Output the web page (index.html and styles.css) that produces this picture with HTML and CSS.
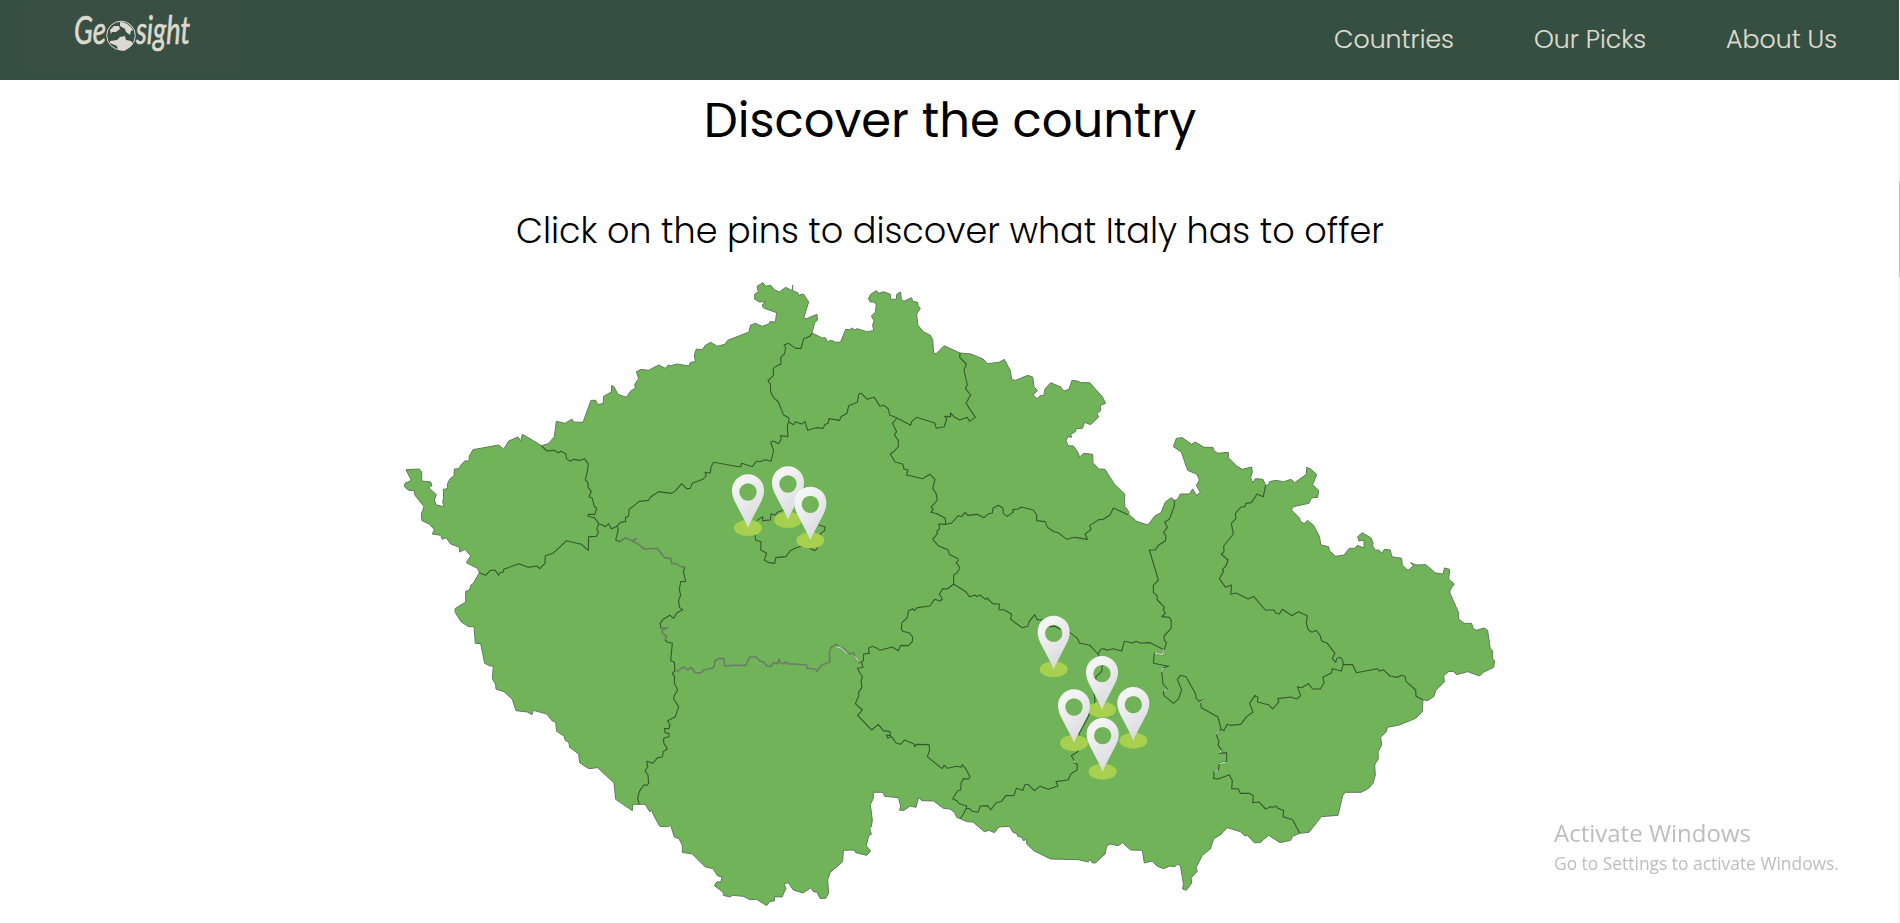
FILE: index.html
```html
<!DOCTYPE html>
<html lang="en">
<head>
<meta charset="utf-8">
<title>Geosight</title>
<link rel="stylesheet" href="styles.css">
</head>
<body>
<header class="header">
  <a class="brand">
    <svg class="logo" viewBox="0 0 212 63">
      <g fill="#dcdad0">
        <text class="logo-text" x="49" y="40" textLength="32" lengthAdjust="spacingAndGlyphs">Ge</text>
        <text class="logo-text" x="111" y="40" textLength="54" lengthAdjust="spacingAndGlyphs">sight</text>
        <circle cx="96" cy="31.500" r="14.300" fill="none" stroke="#dcdad0" stroke-width="1"/>
        <path d="M85 26l4-4 5 0 1 3-4 3-4 0-1 2zM95 18q8 0 13 8l-2 1-1 4-4-3-1-3-5-3zM85 37l7-1 3-3 5-1 1 4 5 1 2 3-4 4-5 3-6-1-1-4-7-3z"/>
      </g>
    </svg>
  </a>
  <nav class="nav"><a>Countries</a><a>Our Picks</a><a>About Us</a></nav>
</header>
<main class="content">
  <h1 class="title">Discover the country</h1>
  <h2 class="subtitle">Click on the pins to discover what Italy has to offer</h2>
  <svg class="map" viewBox="0 0 3360 1950">
    <defs>
      <linearGradient id="pinFill" x1="0" y1="0" x2=".55" y2="1"><stop offset="0" stop-color="#fcfcfc"/><stop offset="1" stop-color="#dadbdd"/></linearGradient>
      <g id="pin">
        <ellipse rx="42" ry="24" fill="#a7d04e"/>
        <path fill="url(#pinFill)" fill-rule="evenodd" d="M0 0C-4-12-10-22-15-32L-40-80C-45-91-48-101-48-113A48 48 0 0 1 48-113C48-101 45-91 40-80L15-32C10-22 4-12 0 0ZM0-134A26 26 0 1 0 0-82A26 26 0 1 0 0-134Z"/>
      </g>
    </defs>
    <path class="land" d="M48 599 88 597 95 605 95 633 122 636 126 648 117 648 118 655 139 674 133 690 139 705 162 710 158 695 161 684 160 658 172 656 173 640 180 626 192 618 193 597 207 596 214 583 226 572 237 574 238 558 249 539 326 525 341 538 356 513 384 501 392 514 397 493 430 512 454 527 475 521 493 500 499 454 525 460 546 447 550 456 579 457 603 391 617 391 624 404 640 400 641 379 664 366 665 347 671 349 684 373 709 382 723 362 736 355 734 343 746 326 739 305 753 298 776 301 806 285 826 295 836 284 840 288 861 282 897 288 901 277 916 275 913 255 919 237 937 239 946 226 962 217 982 229 1004 223 1013 211 1077 186 1082 165 1097 160 1116 169 1137 162 1140 154 1156 157 1160 128 1121 114 1116 105 1126 95 1108 96 1094 87 1094 73 1105 65 1101 49 1119 38 1127 49 1142 46 1153 59 1168 66 1187 52
    1206 62 1208 45 1208 62 1223 68 1226 76 1240 72 1256 96 1241 144 1249 146 1281 133 1282 151 1274 158 1266 189 1297 204 1306 203 1312 215 1324 211 1337 217 1352 216 1367 178 1379 179 1387 174 1394 180 1401 176 1430 185 1451 182 1448 165 1452 152 1444 138 1456 127 1459 105 1453 96 1441 96 1435 86 1442 73 1459 62 1466 70 1481 65 1501 73 1502 88 1519 88 1520 73 1532 66 1534 89 1542 94 1565 83 1568 94 1583 97 1584 107 1591 115 1580 132 1583 164 1599 185 1620 195 1628 208 1631 250 1640 250 1662 227 1710 249 1743 252 1779 267 1792 281 1827 277 1843 268 1861 302 1865 329 1877 331 1913 316 1928 321 1932 351 1943 362 1928 375 1942 386 1951 376 1961 378 1965 357 1982 338 2012 351 2022 363 2037 358 2046 331
    2067 334 2070 338 2099 338 2137 380 2147 400 2131 406 2132 422 2121 430 2126 441 2102 464 2084 457 2077 475 2059 476 2056 485 2042 493 2045 502 2035 500 2028 511 2034 527 2050 528 2063 546 2069 561 2082 550 2108 553 2109 578 2126 597 2145 598 2172 641 2204 672 2204 709 2216 724 2217 734 2240 754 2274 765 2294 738 2313 728 2326 696 2344 683 2353 691 2363 688 2371 672 2398 672 2408 657 2419 676 2431 667 2419 647 2428 630 2421 613 2393 601 2374 546 2350 530 2359 505 2377 503 2405 523 2416 516 2442 532 2469 532 2472 542 2484 550 2515 547 2515 563 2540 588 2557 598 2585 591 2587 607 2582 623 2588 639 2596 626 2619 628 2627 646 2635 645 2639 635 2656 631 2681 635 2703 628 2714 638 2749 613 2750 592 2762 597 2780 614 2768 644 2786 661 2783 682 2764 684 2757 700 2710 710 2704 719 2729 745 2731 754 2743 761 2752 751 2770 765 2788 799 2793 825 2816 830 2818 842 2837 859 2862 855 2878 835 2894 835 2902 826 2922 834 2922 810 2907 813 2903 800 2917 788 2944 805 2949 820 2947 826 2956 841 2966 840 2976 850 2983 838 3001 840 3005 860 3035 865 3037 886 3054 901 3070 888 3062 878 3078 885 3107 884 3137 909 3160 912 3163 894 3179 898 3176 928 3193 942 3180 960 3180 970 3206 1028
    3206 1047 3223 1060 3245 1060 3249 1075 3259 1081 3282 1074 3293 1081 3301 1137 3308 1142 3308 1166 3314 1173 3311 1192 3280 1207 3269 1218 3233 1205 3200 1214 3190 1204 3175 1205 3161 1217 3163 1236 3138 1260 3132 1279 3113 1292 3099 1289 3097 1325 3077 1345 3028 1365 2992 1372 2989 1385 2972 1402 2975 1425 2964 1445 2965 1466 2954 1485 2956 1515 2949 1540 2936 1555 2913 1567 2866 1567 2858 1577 2844 1636 2794 1640 2757 1687 2729 1690 2708 1699 2702 1711 2670 1718 2636 1696 2610 1718 2593 1718 2573 1697 2564 1697 2551 1685 2512 1673 2491 1695 2471 1706 2461 1737 2437 1756 2418 1793 2422 1804 2403 1824 2405 1839 2389 1861 2378 1857 2380 1840 2371 1786 2361 1783 2355 1790 2339 1788 2321 1796 2302 1789 2287 1773 2263 1779 2257 1741 2222 1740 2197 1718 2185 1727 2160 1722 2150 1728 2145 1752
    2116 1779 2106 1778 2099 1767 2095 1776 2065 1769 1982 1767 1931 1742 1910 1722 1910 1708 1900 1712 1895 1702 1883 1699 1880 1690 1870 1688 1858 1669 1827 1671 1813 1688 1797 1681 1783 1685 1749 1656 1730 1655 1711 1646 1700 1642 1693 1626 1679 1617 1660 1615 1631 1593 1595 1592 1586 1582 1578 1612 1560 1608 1542 1621 1529 1621 1532 1608 1525 1583 1484 1579 1479 1567 1450 1567 1450 1585 1441 1604 1447 1650 1444 1670 1439 1675 1444 1693 1436 1697 1429 1727 1442 1743 1430 1756 1397 1748 1392 1740 1360 1741 1358 1775 1320 1808 1313 1830 1316 1870 1307 1885 1290 1885 1281 1866 1271 1866 1263 1853 1239 1869
    1210 1860 1195 1838 1182 1842 1188 1855 1176 1881 1154 1880 1153 1893 1140 1894 1130 1907 1100 1888 1080 1889 1060 1879 1028 1876 1020 1881 1000 1876 1000 1868 988 1858 973 1847 980 1836 993 1835 996 1820 983 1818 969 1796 946 1791 907 1752 877 1747 877 1726 867 1706 853 1701 842 1666 833 1670 809 1669 788 1630 787 1620 780 1626 765 1603 729 1603 727 1622 677 1588 672 1539 623 1493 596 1496 569 1478 566 1452 539 1432 537 1418 525 1410 522 1398 500 1384 497 1356 487 1353 470 1332 430 1321 426 1334 412 1326 378 1322 367 1288 342 1265 318 1257 317 1244 307 1226 310 1188 300 1188 284 1180 272 1121 256 1120 252 1070 236 1070 214 1056 196 1028 195 1016 227 996 227 964 239 960 242 946 250 940 268 908 262 895 229 878
    242 858 225 838 209 846 208 832 182 822 168 803 157 808 152 796 127 792 133 779 119 763 96 752 94 732 102 710 75 676 72 661 58 662 43 650 45 640 64 631Z"/>
    <g class="borders">
      <path d="M454 527 470 543 493 541 505 548 513 544 528 552 529 565 541 574 550 568 572 571 583 566 595 582 593 600 586 629 595 640 594 652 604 664 597 680 607 685 613 710 620 713 615 733 596 733 593 738 613 743 626 760 620 778 626 786 619 799 596 800 595 841 573 822 560 820 530 812 489 850 480 853 466 857 465 880 449 896 441 888 414 892 387 881 366 889 341 898 340 906 330 908 326 916 315 900 300 902 287 916 268 908M626 762 638 765 646 770 656 761 664 777 681 768 692 757 707 755 706 743 716 738 717 718 748 694 775 691 782 681 806 665 845 670 857 662 875 641 890 656 901 655 907 640 940 627 949 617 945 607 961 609 963 590 971 577 1037 589 1052 590 1055 580 1087 590 1100 573 1109 575 1127 569 1143 574 1151 542 1142 516 1150 513 1166 521 1173 509 1172 497 1194 500 1192 468 1196 455M681 768 685 778 677 810 690 815 707 803"/>
      <g transform="translate(930 0)"><path d="M336 189 330 199 311 206 303 235 287 235 265 220 252 225 257 231 254 251 242 262 243 283 236 284 220 295 220 317 204 332 211 342 212 365 220 382 235 396 250 434 267 444 266 456 281 464 286 455 305 462 315 455 323 481 349 473 370 475 374 464 384 460 387 446 419 451 423 440 441 430 446 407 472 397 476 373 484 370 502 388 523 382 540 409 552 406 565 417 569 435 591 444 632 466 635 455 650 442 704 459 709 475 733 470 740 447 734 439 752 440 751 429 762 440 779 450 802 442 808 454 826 442 808 415 798 399 812 375 796 355 802 345 792 300 799 282 779 262 780 249M591 444 577 460 590 485 583 495 595 511 595 530 582 544 571 552 585 576 608 582 612 597 624 600 620 615 635 618 667 626 690 613 705 628 698 655 708 670 712 690 693 712 700 718 692 727 711 731 736 745 737 763 716 762 719 775 710 785 713 790 698 808 715 827 745 840 748 853 776 868M737 763 755 759 775 737 785 740 795 727 803 736 832 733 852 743 866 731 877 729 879 715 895 706 909 715 910 731 922 739 940 726 938 719 955 717 964 711 1000 720 1010 735 1010 752 1036 755 1042 772 1062 785 1075 788 1100 808M170 752 188 740 188 752 211 750 213 732 226 735 232 727 257 718M355 765 375 770 374 782 362 790 350 838 343 842 320 828 305 828 285 835 270 843 258 860 227 863 224 880 204 877 193 870 200 850 182 840 183 815 167 810 165 795"/></g>
      <g transform="translate(1950 180)"><path d="M80 628 104 622 142 628 135 612 153 599 149 587 176 569 190 568 210 555 220 534 264 554M403 511 403 528 388 568 374 577 382 592 371 607 378 618 376 633 355 646 346 660 328 660 355 750 340 766 340 787 351 797 352 810 374 833 369 838 376 850 365 860 388 862 394 872M677 466 670 500 651 492 634 518 617 520 615 530 603 531 586 550 588 565 574 580 580 612 551 648 552 665 544 672 564 690 558 708 547 718 551 724 538 746 557 772 575 765 572 793 588 789 625 807 641 799 676 840 702 840 708 850 718 852 727 838 756 857 775 845 802 857"/></g>
      <g transform="translate(150 840)"><path d="M735 50 730 65 737 94 722 95 718 118 722 136 716 150 718 172 728 179 711 188 701 205 690 196 672 206 660 220 663 235M675 270 684 277 697 280 692 332 703 337 705 362 697 370 704 380 703 400 713 420 701 440 701 447 716 470 706 500 683 512 690 525 687 536 673 536 675 548 687 550 687 560 671 565 671 578 682 597 670 605 667 621 653 623 638 640 620 634 623 650 615 663 624 675 626 700 620 706 611 705 598 725 593 745 598 763"/></g>
      <g transform="translate(1230 870)"><path d="M182 308 190 302 191 282 208 280 205 265 217 259 230 264 240 271 277 261 295 272 302 256 325 257 337 245 338 231 327 218 308 214 304 205 306 187 322 173 325 153 338 146 343 152 352 143 390 138 404 118 420 123 427 117 418 102 428 86 442 87 461 72 461 44 470 40 480 24 469 8 476 0M185 308 189 322 172 325 187 350 183 365 186 382 175 398 177 405 166 431 187 450 173 466 215 510 235 493 250 512 270 515 271 527 259 525 263 534 275 530 288 549 301 553 314 540 342 552 344 560 349 553 387 554 389 570 382 590 426 626 433 616 443 625 471 619 483 622 487 614 497 626 510 650 506 657 490 656 483 670 482 690 473 692 458 716 470 722 478 731 500 738 499 745 490 762 481 776M500 745 509 746 517 754 534 757 541 738 563 737 572 750 589 728 605 724 617 707 642 706 649 685 669 691 674 675 684 673 703 692 720 679 745 688 774 678 768 665 804 660 813 641 831 630 832 613 820 608 822 600 814 587 835 574 838 520 870 460 885 425 883 400 888 350 905 335 907 315 898 290 894 282M461 72 497 95 508 110 526 105 530 110 540 105 556 118 561 114 578 131 598 132 597 149 614 150 635 163 632 178 666 203 683 199 688 184 704 164 712 179 728 180 750 200 765 199 780 207 810 218 833 236 838 249 870 256 894 282 902 268 912 266 920 271 940 266 965 273 973 244 998 249 1008 244 1020 249 1050 248 1089 268"/></g>
      <g transform="translate(2130 870)"><path d="M214 180 213 206 192 228 193 240 199 248 193 268 188 270 189 285 163 280 160 310 206 319 188 323 185 335 189 372 203 388 190 395 192 407 221 430 236 416 245 390 232 358 242 346 258 350 287 402 289 416 298 424 313 418 302 430 304 443 354 471 363 507 349 525 357 545 354 555 366 572 359 580 380 578 380 604 358 610 355 632 342 634 341 655 355 657 388 644 397 662 395 686 415 687 421 700 449 700 460 708 458 728 477 726 497 747 512 740 520 742 528 738 534 745 551 752 549 770 578 779 599 820M363 507 372 512 381 493 390 496 422 493 440 470 459 456 449 430 465 406 474 412 472 426 505 434 518 447 537 425 533 416 571 411 590 417 602 407 592 380 605 383 625 371 638 387 661 387 672 368 669 352 695 338 697 326 724 333 730 313M622 167 619 190 625 210 636 217 649 211 661 228 665 243 682 250 705 280 697 295 707 307 711 295 721 292 728 300 730 313 758 314 769 338 832 326 838 333 850 329 870 348 893 352 903 346 915 349 918 364 947 390 948 409 969 419"/></g>
    </g>
    <g class="gaps">
      <path d="M690 815 707 803 725 812 738 806 728 815 742 820 763 837 802 835 824 863 842 866 846 881 858 881 872 890 884 890"/>
      <g transform="translate(150 840)"><path d="M663 235 684 233 667 240 667 250 680 258 675 270M705 362 714 363 725 353 735 352 742 360 753 353 766 368 783 369 791 360 815 355 823 349 824 333 838 325 852 326 854 348 878 346 918 346 929 321 948 321 961 334 973 337 980 348 993 349 1000 338 1014 340 1017 328 1022 339 1032 342 1037 335 1043 341 1100 345 1101 355 1125 357 1131 364 1145 345 1170 335 1168 308 1173 292 1189 283 1200 292 1210 295 1228 312 1240 308 1250 330 1262 340"/></g>
    </g>
    <g class="glints"><path d="M2319 1138V1154L2295 1150M2318 1193 2315 1205M2332 1258 2322 1264M2443 1288 2432 1298M2488 1383 2479 1393M2494 1440 2490 1449M2507 1476 2488 1481M2485 1502 2473 1504M1340 1130 1355 1135 1372 1152M1395 1159 1405 1175M2052 1472V1479"/></g>
    <g class="pins">
      <use href="#pin" x="1074" y="774"/><use href="#pin" x="1194" y="750"/><use href="#pin" x="1261" y="811"/>
      <use href="#pin" x="1991" y="1198"/><use href="#pin" x="2136" y="1319"/><use href="#pin" x="2230" y="1412"/><use href="#pin" x="2052" y="1419"/><use href="#pin" x="2138" y="1505"/>
    </g>
  </svg>
</main>
<aside class="watermark"><p class="wm-title">Activate Windows</p><p class="wm-text">Go to Settings to activate Windows.</p></aside>
<div class="scrollbar"><div class="thumb"></div></div>
</body>
</html>
```

FILE: styles.css
```css
* { box-sizing: border-box; }
body {
  margin: 0;
  height: 923px;
  overflow: hidden;
  background: #fff;
  color: #000;
  font-family: Poppins, Inter, "Open Sans", sans-serif;
}
.header {
  display: flex;
  justify-content: space-between;
  height: 80px;
  padding: 4px 63px 0 25px;
  background: #354f42;
}
.brand { width: 212px; height: 63px; background: #3a4f43; }
.logo { display: block; width: 212px; height: 63px; }
.logo-text { font: italic 400 39px Lato, sans-serif; stroke: #dcdad0; stroke-width: .7; }
.nav {
  display: flex;
  gap: 80px;
  padding-top: 16px;
  color: #dddace;
  font-size: 25.2px;
  line-height: 40px;
  font-weight: 300;
  -webkit-text-stroke: .2px #dddace;
}
.content { display: flex; flex-direction: column; align-items: center; }
.title { margin: 0; padding-top: 6px; height: 110px; font-size: 48px; line-height: 70px; font-weight: 400; white-space: nowrap; }
.subtitle { margin: 0; padding-top: 16px; height: 80px; font-size: 35px; line-height: 50px; font-weight: 300; white-space: nowrap; }
.map { display: block; width: 1120px; height: 650px; }
.land { fill: #70b359; stroke: #5f7d59; stroke-width: 3; stroke-linejoin: round; }
.borders { fill: none; stroke: #365a2f; stroke-width: 3.3; stroke-linejoin: round; }
.gaps { fill: none; stroke: #6b7f64; stroke-width: 5; stroke-linejoin: round; }
.glints { fill: none; stroke: #dfe8dc; stroke-width: 3; }
.watermark {
  position: fixed;
  left: 1554px;
  top: 816px;
  color: #bdbdbd;
  font-family: "Segoe UI", "Open Sans", sans-serif;
}
.watermark p { margin: 0; white-space: nowrap; }
.wm-title { font-size: 24px; line-height: 34px; }
.wm-text { font-size: 17.4px; line-height: 26px; }
.scrollbar { position: fixed; top: 0; right: 0; width: 1px; height: 923px; padding-top: 181px; background: #f1f1f1; }
.thumb { height: 96px; background: #c1c1c1; }
```
